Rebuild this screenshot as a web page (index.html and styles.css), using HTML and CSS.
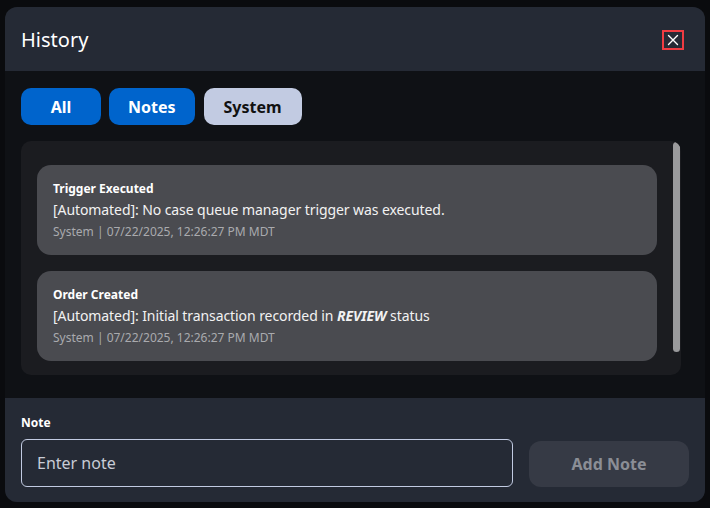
FILE: index.html
```html
<!DOCTYPE html>
<html>
<head>
	<title>History</title>
	<link rel="stylesheet" href="styles.css">
</head>
<body>
  <div class="modal">
    <div class="modal-header">
      <h2 class="modal-title">History</h2>
      <button class="close-btn" type="button" aria-label="Close">
        <svg width="12" height="12" viewBox="0 0 12 12"><path d="M1.5 1.5L10.5 10.5M10.5 1.5L1.5 10.5" stroke="#fff" stroke-width="1.4" stroke-linecap="round"/></svg>
      </button>
    </div>

    <div class="modal-body">
      <div class="filters">
        <button class="filter filter-active" type="button">All</button>
        <button class="filter filter-active" type="button">Notes</button>
        <button class="filter filter-system" type="button">System</button>
      </div>

      <div class="history-list">
        <div class="history-item">
          <div class="item-title">Trigger Executed</div>
          <div class="item-text">[Automated]: No case queue manager trigger was executed.</div>
          <div class="item-meta">System | 07/22/2025, 12:26:27 PM MDT</div>
        </div>
        <div class="history-item">
          <div class="item-title">Order Created</div>
          <div class="item-text">[Automated]: Initial transaction recorded in <b><i>REVIEW</i></b> status</div>
          <div class="item-meta">System | 07/22/2025, 12:26:27 PM MDT</div>
        </div>
        <!-- scrollbar thumb, list is scrolled to top -->
        <div class="scroll-thumb"></div>
      </div>
    </div>

    <div class="modal-footer">
      <label class="note-label" for="note">Note</label>
      <div class="note-row">
        <input class="note-input" type="text" id="note" placeholder="Enter note">
        <button class="add-btn" type="button" disabled>Add Note</button>
      </div>
    </div>
  </div>
</body>
</html>
```

FILE: styles.css
```css
/* page behind the dialog */
body {
  margin: 0;
  padding: 7px 5px;
  background-color: #0a0b0e;
  font-family: "Noto Sans", "Open Sans", sans-serif;
}

/* dialog box */
.modal {
  width: 700px;
  height: 495px;
  border-radius: 12px;
  overflow: hidden;
  display: flex;
  flex-direction: column;
  background-color: #0f1115;
}

.modal-header {
  height: 64px;
  padding: 0 21px 0 16px;
  display: flex;
  align-items: center;
  justify-content: space-between;
  background-color: #252a35;
}

.modal-title {
  margin: 0;
  font-size: 20px;
  font-weight: 400;
  color: #fff;
}

.close-btn {
  width: 22px;
  height: 20px;
  padding: 0;
  margin-top: 2px;
  border: 2px solid #ef3c42;
  background: transparent;
  display: flex;
  align-items: center;
  justify-content: center;
  cursor: pointer;
}

.modal-body {
  flex: 1;
  padding: 17px 24px 23px 16px;
}

/* filter buttons */
.filters {
  display: flex;
  gap: 8px;
  margin-bottom: 16px;
}

.filter {
  height: 37px;
  padding: 0 19px;
  border: none;
  border-radius: 10px;
  font-family: inherit;
  font-size: 16px;
  font-weight: 700;
  cursor: pointer;
}

.filter-active {
  background-color: #0064cc;
  color: #fff;
}

.filter:first-child {
  width: 80px;
}

.filter-system {
  margin-left: 1px;
  padding: 0 20px;
  background-color: #c2cbe2;
  color: #111;
}

/* history entries */
.history-list {
  position: relative;
  height: 234px;
  box-sizing: border-box;
  padding: 24px 24px 0 16px;
  border-radius: 10px;
  background-color: #1b1c20;
  overflow: hidden;
}

.scroll-thumb {
  position: absolute;
  top: 1px;
  right: 1px;
  width: 7px;
  height: 210px;
  border-radius: 4px;
  background-color: #9a9a9c;
}

.history-item {
  height: 90px;
  box-sizing: border-box;
  padding: 15px 16px 0 16px;
  border-radius: 14px;
  background-color: #4a4b50;
  margin-bottom: 16px;
}

.item-title {
  font-size: 12px;
  font-weight: 700;
  color: #fff;
  line-height: 18px;
}

.item-text {
  font-size: 14px;
  color: #f2f2f2;
  line-height: 24px;
  letter-spacing: -0.08px;
}

.item-meta {
  font-size: 12px;
  color: #a9aaae;
  line-height: 20px;
}

/* note form */
.modal-footer {
  height: 104px;
  box-sizing: border-box;
  padding: 16px 16px 0 16px;
  background-color: #252a35;
}

.note-label {
  display: block;
  font-size: 12px;
  font-weight: 700;
  color: #fff;
  line-height: 18px;
  margin-bottom: 7px;
}

.note-row {
  display: flex;
  align-items: center;
  gap: 16px;
}

.note-input {
  flex: 1;
  height: 48px;
  box-sizing: border-box;
  padding: 0 15px;
  border: 1px solid #c2cbe2;
  border-radius: 6px;
  background: transparent;
  font-family: inherit;
  font-size: 16px;
  color: #fff;
}

.note-input::placeholder {
  color: #c8ccd6;
}

.add-btn {
  width: 160px;
  height: 46px;
  margin-top: 2px;
  border: none;
  border-radius: 12px;
  background-color: #363a45;
  color: #8b8e96;
  font-family: inherit;
  font-size: 16px;
  font-weight: 700;
}
```
